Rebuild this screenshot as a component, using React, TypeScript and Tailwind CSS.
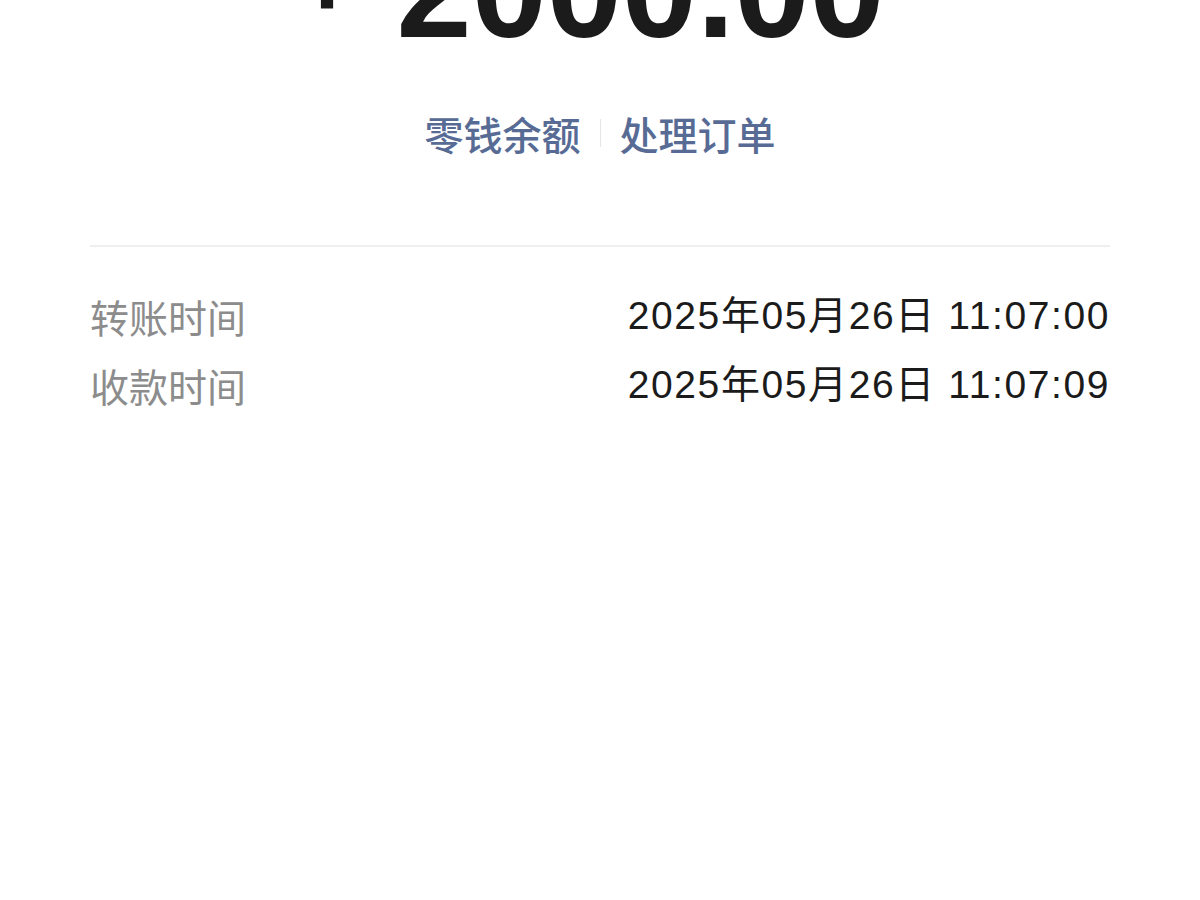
import React from "react";

const cjk = { fontFamily: '"Noto Sans CJK SC", sans-serif' };
const mixed = { fontFamily: '"Liberation Sans", "Noto Sans CJK SC", sans-serif' };

function InfoRow({ label, value, first }: { label: string; value: string; first?: boolean }) {
  return (
    <div className={`flex items-center justify-between leading-[50px] ${first ? "mt-[44px]" : "mt-[19px]"}`}>
      <span className="text-[39px] text-[#8c8c8c]" style={cjk}>
        {label}
      </span>
      <span className="text-[39px] tracking-[1.6px] text-[#1b1b1b]" style={mixed}>
        {value}
      </span>
    </div>
  );
}

export default function App() {
  return (
    <div className="h-[900px] w-[1200px] overflow-hidden bg-white">
      <div
        className="mt-[-77px] pr-[14px] text-center leading-none whitespace-nowrap text-[#1b1b1b]"
        style={{ fontFamily: '"Liberation Sans", Arial, sans-serif' }}
      >
        <span className="mr-[44px] inline-block align-[28px] text-[92px] font-bold">¥</span>
        <span className="text-[135px] font-bold">2000.00</span>
      </div>

      <div
        className="mt-[55px] flex items-center justify-center text-[39px] leading-[40px] font-medium text-[#576b95]"
        style={cjk}
      >
        <span>零钱余额</span>
        <span className="mx-[19px] h-[28px] w-px bg-[#e6e6e6]" />
        <span>处理订单</span>
      </div>

      <div className="mx-[90px] mt-[92px] h-[2px] bg-[#efefef]" />

      <div className="mx-[90px]">
        <InfoRow first label="转账时间" value="2025年05月26日 11:07:00" />
        <InfoRow label="收款时间" value="2025年05月26日 11:07:09" />
      </div>
    </div>
  );
}
